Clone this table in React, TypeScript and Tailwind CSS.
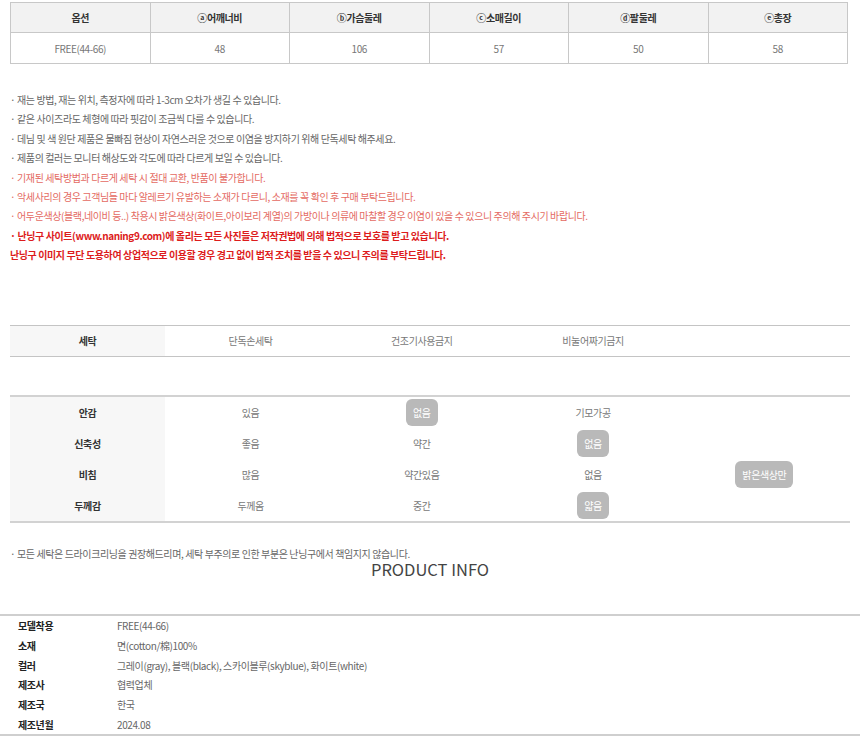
const sizeHead = ["옵션", "ⓐ어깨너비", "ⓑ가슴둘레", "ⓒ소매길이", "ⓓ팔둘레", "ⓔ총장"];
const sizeRow = ["FREE(44-66)", "48", "106", "57", "50", "58"];

const notes = [
  { text: "· 재는 방법, 재는 위치, 측정자에 따라 1-3cm 오차가 생길 수 있습니다.", cls: "text-[#666]" },
  { text: "· 같은 사이즈라도 체형에 따라 핏감이 조금씩 다를 수 있습니다.", cls: "text-[#666]" },
  { text: "· 데님 및 색 원단 제품은 물빠짐 현상이 자연스러운 것으로 이염을 방지하기 위해 단독세탁 해주세요.", cls: "text-[#666]" },
  { text: "· 제품의 컬러는 모니터 해상도와 각도에 따라 다르게 보일 수 있습니다.", cls: "text-[#666]" },
  { text: "· 기재된 세탁방법과 다르게 세탁 시 절대 교환, 반품이 불가합니다.", cls: "text-[#e46a62]" },
  { text: "· 악세사리의 경우 고객님들 마다 알레르기 유발하는 소재가 다르니, 소재를 꼭 확인 후 구매 부탁드립니다.", cls: "text-[#e46a62]" },
  { text: "· 어두운색상(블랙,네이비 등..) 착용시 밝은색상(화이트,아이보리 계열)의 가방이나 의류에 마찰할 경우 이염이 있을 수 있으니 주의해 주시기 바랍니다.", cls: "text-[#e46a62]" },
  { text: "· 난닝구 사이트(www.naning9.com)에 올리는 모든 사진들은 저작권법에 의해 법적으로 보호를 받고 있습니다.", cls: "text-[#dd1c1c] font-bold" },
  { text: "난닝구 이미지 무단 도용하여 상업적으로 이용할 경우 경고 없이 법적 조치를 받을 수 있으니 주의를 부탁드립니다.", cls: "text-[#dd1c1c] font-bold" },
];

// cells: [text, selected]
const fabric: { label: string; cells: [string, boolean][] }[] = [
  { label: "안감", cells: [["있음", false], ["없음", true], ["기모가공", false], ["", false]] },
  { label: "신축성", cells: [["좋음", false], ["약간", false], ["없음", true], ["", false]] },
  { label: "비침", cells: [["많음", false], ["약간있음", false], ["없음", false], ["밝은색상만", true]] },
  { label: "두께감", cells: [["두께옴", false], ["중간", false], ["얇음", true], ["", false]] },
];

const info = [
  ["모델착용", "FREE(44-66)"],
  ["소재", "면(cotton/棉)100%"],
  ["컬러", "그레이(gray), 블랙(black), 스카이블루(skyblue), 화이트(white)"],
  ["제조사", "협력업체"],
  ["제조국", "한국"],
  ["제조년월", "2024.08"],
];

const Pill = ({ text }: { text: string }) => (
  <span className="inline-flex h-[27px] items-center rounded-[6px] bg-[#b9b9b9] px-[7px] text-white">{text}</span>
);

export default function App() {
  return (
    <div
      className="w-[860px] bg-white pb-[8px] text-[10px] tracking-[-0.4px] text-[#555]"
      style={{ fontFamily: '"Noto Sans CJK KR", "Noto Sans", sans-serif' }}
    >
      {/* size table */}
      <table className="mx-[10px] mt-[2px] w-[838px] table-fixed border-collapse border border-[#c8c8c8]">
        <thead>
          <tr className="h-[30px] bg-[#f2f2f2]">
            {sizeHead.map((h) => (
              <th key={h} className="border border-[#c8c8c8] text-center font-bold text-[#333]">
                {h}
              </th>
            ))}
          </tr>
        </thead>
        <tbody>
          <tr className="h-[31px]">
            {sizeRow.map((v, i) => (
              <td key={i} className="border border-[#c8c8c8] text-center text-[#777]">
                {v}
              </td>
            ))}
          </tr>
        </tbody>
      </table>

      {/* notes */}
      <div className="mt-[26px] px-[10px] leading-[19.4px]">
        {notes.map((n, i) => (
          <p key={i} className={n.cls}>
            {n.text}
          </p>
        ))}
      </div>

      {/* washing */}
      <div className="mx-[10px] mt-[60px] flex h-[32px] items-stretch border-y border-[#c4c4c4]">
        <div className="flex w-[155px] items-center justify-center bg-[#f7f7f7] font-bold text-[#333]">세탁</div>
        {["단독손세탁", "건조기사용금지", "비눌어짜기금지", ""].map((w, i) => (
          <div key={i} className="flex flex-1 items-center justify-center text-[#777]">
            {w}
          </div>
        ))}
      </div>

      {/* fabric */}
      <div className="mx-[10px] mt-[38px] border-y-2 border-[#d2d2d2]">
        {fabric.map((r) => (
          <div key={r.label} className="flex h-[31px] items-stretch">
            <div className="flex w-[155px] items-center justify-center bg-[#f7f7f7] font-bold text-[#333]">
              {r.label}
            </div>
            {r.cells.map(([t, sel], i) => (
              <div key={i} className="flex flex-1 items-center justify-center text-[#777]">
                {sel ? <Pill text={t} /> : t}
              </div>
            ))}
          </div>
        ))}
      </div>

      <p className="mt-[21px] px-[10px] leading-[19px] text-[#666]">
        · 모든 세탁은 드라이크리닝을 권장해드리며, 세탁 부주의로 인한 부분은 난닝구에서 책임지지 않습니다.
      </p>
      <h2 className="mt-[-5px] text-center text-[16.5px] font-normal leading-[22px] tracking-normal text-[#444]">
        PRODUCT INFO
      </h2>

      {/* product info */}
      <div className="mt-[34px] border-y-2 border-[#cfcfcf]">
        {info.map(([k, v]) => (
          <div key={k} className="flex h-[19.8px] items-center">
            <span className="w-[117px] pl-[18px] font-bold text-[#222]">{k}</span>
            <span className="text-[#666]">{v}</span>
          </div>
        ))}
      </div>
    </div>
  );
}
